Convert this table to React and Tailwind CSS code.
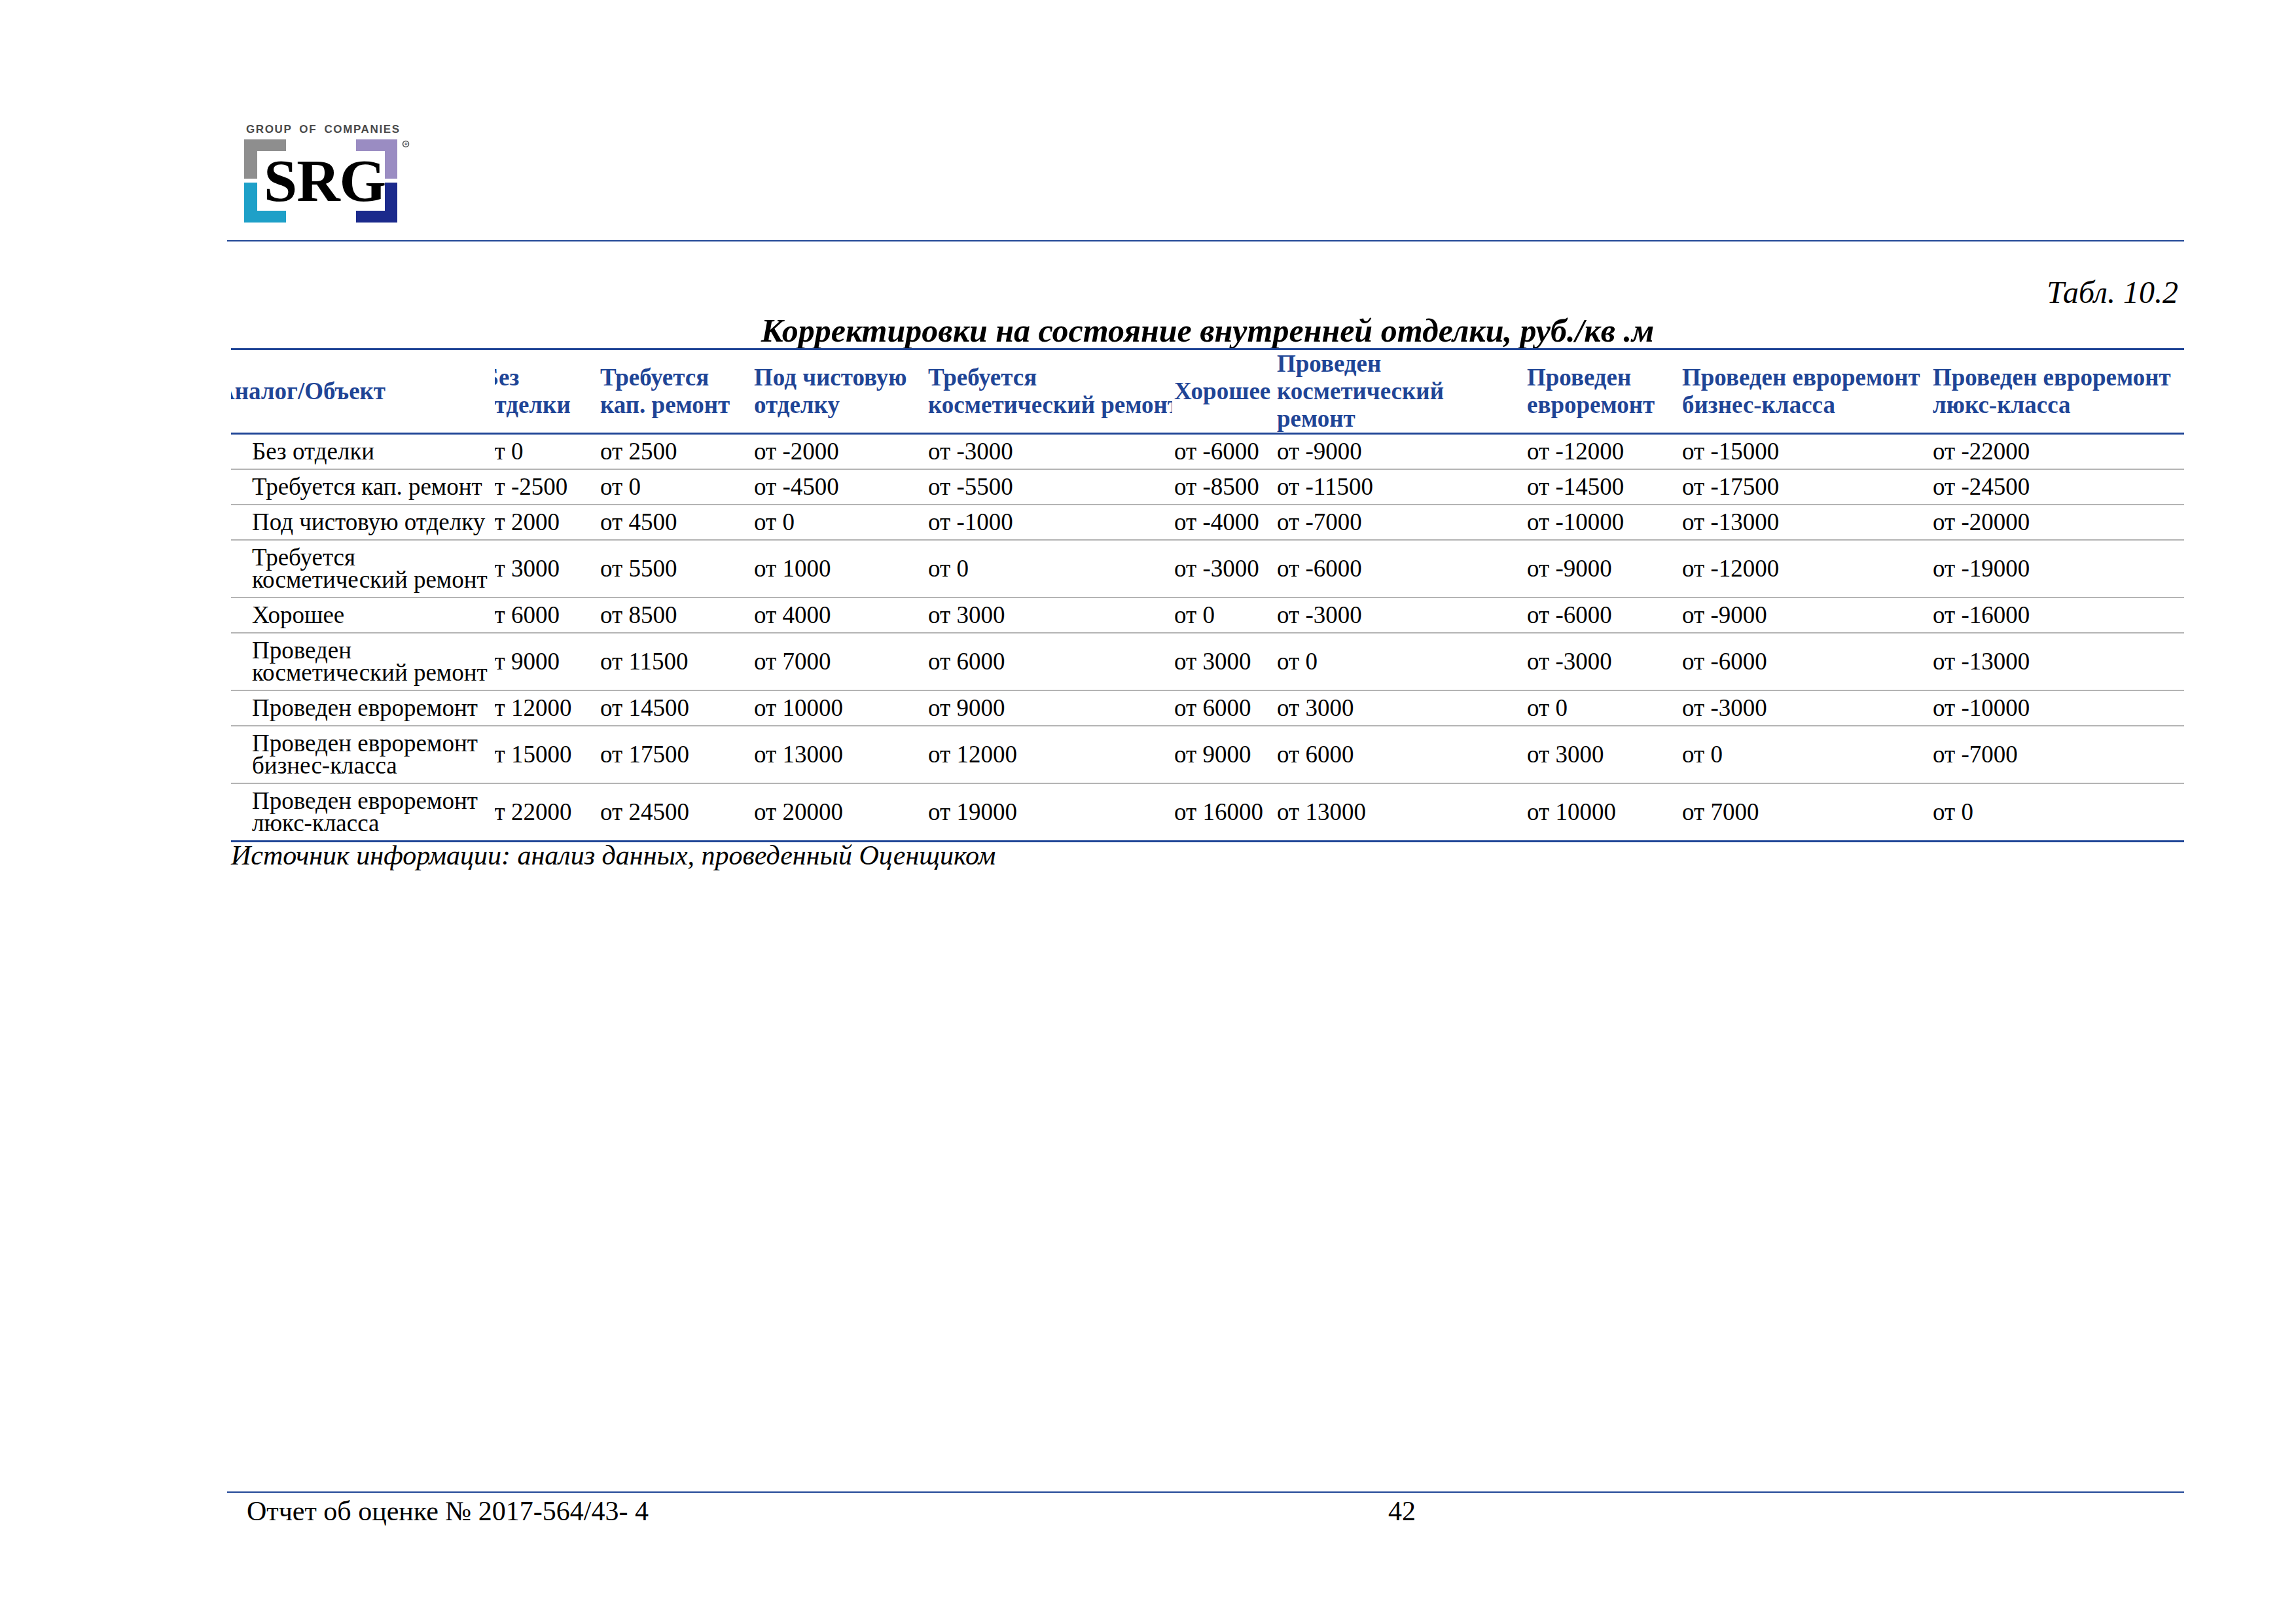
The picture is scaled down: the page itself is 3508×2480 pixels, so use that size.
import React from "react";

const GRID =
  "grid grid-cols-[403px_158px_235px_266px_376px_157px_382px_237px_383px_387px]";

const PADS = [
  "pl-[32px]",
  "pl-0",
  "pl-[3px]",
  "pl-[3px]",
  "pl-[3px]",
  "pl-[3px]",
  "pl-[3px]",
  "pl-[3px]",
  "pl-[3px]",
  "pl-[3px]",
];

const HEADERS = [
  ["Аналог/Объект"],
  ["Без", "отделки"],
  ["Требуется", "кап. ремонт"],
  ["Под чистовую", "отделку"],
  ["Требуется", "косметический ремонт"],
  ["Хорошее"],
  ["Проведен", "косметический", "ремонт"],
  ["Проведен", "евроремонт"],
  ["Проведен евроремонт", "бизнес-класса"],
  ["Проведен евроремонт", "люкс-класса"],
];

const ROWS = [
  [["Без отделки"], "от 0", "от 2500", "от -2000", "от -3000", "от -6000", "от -9000", "от -12000", "от -15000", "от -22000"],
  [["Требуется кап. ремонт"], "от -2500", "от 0", "от -4500", "от -5500", "от -8500", "от -11500", "от -14500", "от -17500", "от -24500"],
  [["Под чистовую отделку"], "от 2000", "от 4500", "от 0", "от -1000", "от -4000", "от -7000", "от -10000", "от -13000", "от -20000"],
  [["Требуется", "косметический ремонт"], "от 3000", "от 5500", "от 1000", "от 0", "от -3000", "от -6000", "от -9000", "от -12000", "от -19000"],
  [["Хорошее"], "от 6000", "от 8500", "от 4000", "от 3000", "от 0", "от -3000", "от -6000", "от -9000", "от -16000"],
  [["Проведен", "косметический ремонт"], "от 9000", "от 11500", "от 7000", "от 6000", "от 3000", "от 0", "от -3000", "от -6000", "от -13000"],
  [["Проведен евроремонт"], "от 12000", "от 14500", "от 10000", "от 9000", "от 6000", "от 3000", "от 0", "от -3000", "от -10000"],
  [["Проведен евроремонт", "бизнес-класса"], "от 15000", "от 17500", "от 13000", "от 12000", "от 9000", "от 6000", "от 3000", "от 0", "от -7000"],
  [["Проведен евроремонт", "люкс-класса"], "от 22000", "от 24500", "от 20000", "от 19000", "от 16000", "от 13000", "от 10000", "от 7000", "от 0"],
];

function Logo() {
  return (
    <div className="relative ml-[26px] mt-[190px] h-[150px] w-[256px]">
      <div className="absolute left-[3px] top-[-2px] whitespace-nowrap font-['Liberation_Sans',Arial,sans-serif] text-[17px] font-bold leading-[20px] tracking-[1.6px] text-[#4a4a4a] [word-spacing:5px]">
        GROUP OF COMPANIES
      </div>
      <svg
        className="absolute left-0 top-0"
        width="256"
        height="150"
        viewBox="0 0 256 150"
      >
        <path d="M0 23 H64 V41 H20 V83 H0 Z" fill="#8e8e8e" />
        <path d="M0 89 H20 V132 H64 V150 H0 Z" fill="#1ea0c8" />
        <path d="M171 23 H234 V83 H215 V41 H171 Z" fill="#9a8cc2" />
        <path d="M215 89 H234 V150 H171 V132 H215 Z" fill="#1b2a8c" />
        <circle cx="247" cy="30" r="4.5" fill="none" stroke="#555" strokeWidth="1.6" />
        <text x="245.2" y="32.2" fontSize="6" fontFamily="Liberation Sans, sans-serif" fontWeight="bold" fill="#555">R</text>
      </svg>
      <div className="absolute left-[30px] top-[40px] whitespace-nowrap font-['Liberation_Serif',serif] text-[92px] font-bold leading-[92px] tracking-[-1px] text-black">
        SRG
      </div>
    </div>
  );
}

function HeaderRow() {
  return (
    <div className={`${GRID} border-y-[3px] border-[#1f4596]`}>
      {HEADERS.map((lines, i) => (
        <div
          key={i}
          className={`flex h-[126px] flex-col justify-center overflow-hidden ${i === 0 ? "pl-0" : PADS[i]}`}
        >
          <div className={i === 0 ? "ml-[-21px]" : i === 1 ? "ml-[-18.5px]" : ""}>
            {lines.map((l, j) => (
              <div key={j} className="whitespace-nowrap">
                {l}
              </div>
            ))}
          </div>
        </div>
      ))}
    </div>
  );
}

function BodyRow({ row, last }) {
  return (
    <div
      className={`${GRID} ${last ? "border-b-[3px] border-[#1f4596]" : "border-b-2 border-[#b4b4b4]"}`}
    >
      {row.map((cell, i) => {
        const lines = Array.isArray(cell) ? cell : [cell];
        return (
          <div
            key={i}
            className={`flex flex-col justify-center overflow-hidden py-[9px] ${PADS[i]}`}
          >
            <div className={i === 1 ? "ml-[-18.5px]" : ""}>
              {lines.map((l, j) => (
                <div key={j} className="whitespace-nowrap">
                  {l}
                </div>
              ))}
            </div>
          </div>
        );
      })}
    </div>
  );
}

export default function App() {
  return (
    <div className="flex h-[2480px] w-[3508px] flex-col bg-white font-['Liberation_Serif','Times_New_Roman',serif] text-black">
      <div className="ml-[347px] flex w-[2990px] flex-1 flex-col">
        <Logo />
        <div className="mt-[27px] h-[2px] bg-[#1f4596]" />
        <div className="mt-[50px] pr-[9px] text-right text-[48px] italic leading-[56px]">
          Табл. 10.2
        </div>
        <div className="ml-[6px] mt-[3px] w-[2984px] text-center text-[50px] font-bold italic leading-[54px]">
          Корректировки на состояние внутренней отделки, руб./кв .м
        </div>
        <div className="ml-[6px] w-[2984px]">
          <div className="text-[37px] font-bold leading-[42px] text-[#1f4596]">
            <HeaderRow />
          </div>
          <div className="text-[37px] leading-[34px]">
            {ROWS.map((r, i) => (
              <BodyRow key={i} row={r} last={i === ROWS.length - 1} />
            ))}
          </div>
          <div className="text-[42px] italic leading-[40px]">
            Источник информации: анализ данных, проведенный Оценщиком
          </div>
        </div>
        <div className="mt-auto mb-[147px]">
          <div className="h-[2px] bg-[#1f4596]" />
          <div className="mt-[4px] flex pl-[30px] text-[42px] leading-[48px]">
            <span className="inline-block w-[1744px] whitespace-nowrap">
              Отчет об оценке № 2017-564/43- 4
            </span>
            <span>42</span>
          </div>
        </div>
      </div>
    </div>
  );
}
